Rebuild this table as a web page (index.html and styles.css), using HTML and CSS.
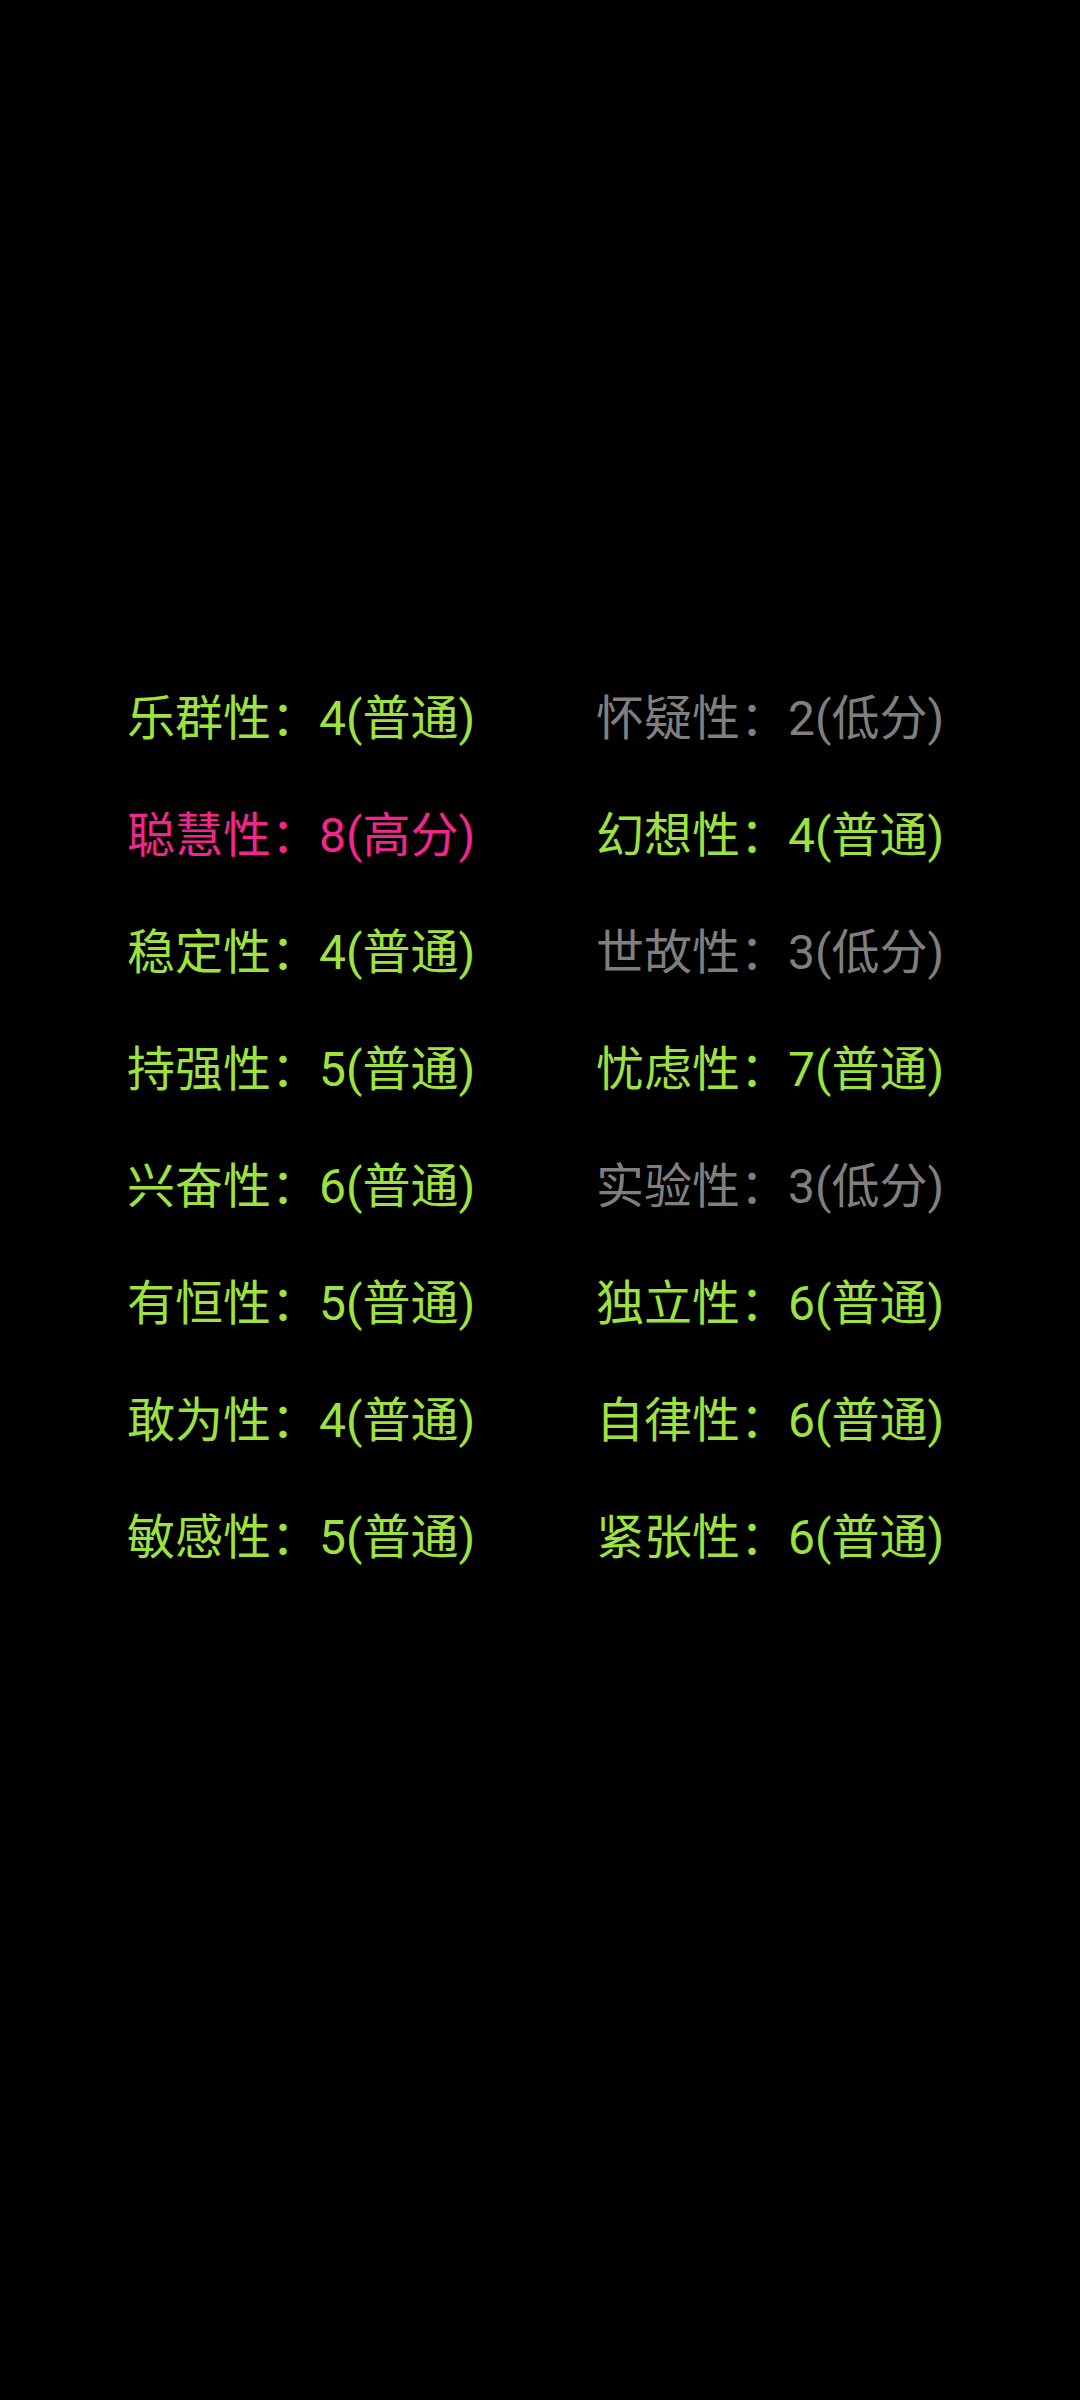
FILE: index.html
```html
<!DOCTYPE html>
<html lang="zh-CN">
<head>
<meta charset="utf-8">
<link rel="stylesheet" href="styles.css">
</head>
<body>
<main class="grid">
  <div class="item green">乐群性：4(普通)</div>
  <div class="item gray">怀疑性：2(低分)</div>
  <div class="item pink">聪慧性：8(高分)</div>
  <div class="item green">幻想性：4(普通)</div>
  <div class="item green">稳定性：4(普通)</div>
  <div class="item gray">世故性：3(低分)</div>
  <div class="item green">持强性：5(普通)</div>
  <div class="item green">忧虑性：7(普通)</div>
  <div class="item green">兴奋性：6(普通)</div>
  <div class="item gray">实验性：3(低分)</div>
  <div class="item green">有恒性：5(普通)</div>
  <div class="item green">独立性：6(普通)</div>
  <div class="item green">敢为性：4(普通)</div>
  <div class="item green">自律性：6(普通)</div>
  <div class="item green">敏感性：5(普通)</div>
  <div class="item green">紧张性：6(普通)</div>
</main>
</body>
</html>
```
FILE: styles.css
```css
html, body {
  margin: 0;
  padding: 0;
  background: #000;
  width: 1080px;
  height: 2400px;
  overflow: hidden;
}
.grid {
  display: grid;
  grid-template-columns: 469px 469px;
  grid-auto-rows: 117px;
  padding-top: 655px;
  padding-left: 127px;
  font-family: Roboto, "Noto Sans CJK SC", sans-serif;
  font-size: 48px;
}
.item {
  display: flex;
  align-items: center;
  white-space: nowrap;
}
.green { color: #9de23f; }
.pink { color: #f0268c; }
.gray { color: #7f7f7f; }
```
